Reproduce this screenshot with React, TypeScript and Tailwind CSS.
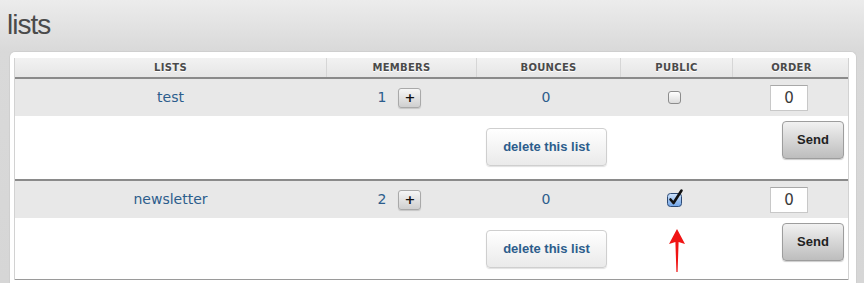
import React from 'react';

type ListRow = {
  name: string;
  members: number;
  bounces: number;
  isPublic: boolean;
  order: number;
};

const lists: ListRow[] = [
  { name: 'test', members: 1, bounces: 0, isPublic: false, order: 0 },
  { name: 'newsletter', members: 2, bounces: 0, isPublic: true, order: 0 },
];

const cols = 'grid grid-cols-[311px_150px_144px_112px_118px]';
const body = { fontFamily: '"DejaVu Sans", Verdana, sans-serif' };
const btn = { fontFamily: '"Liberation Sans", Arial, sans-serif' };

const CheckedBox: React.FC = () => (
  <svg width="20" height="20" viewBox="0 0 20 20" className="-mt-[3px]">
    <defs>
      <linearGradient id="cb" x1="0" y1="0" x2="0" y2="1">
        <stop offset="0" stopColor="#cfe3fb" />
        <stop offset="1" stopColor="#6fa3e6" />
      </linearGradient>
    </defs>
    <rect x="2.5" y="5.5" width="14" height="13" rx="3" fill="url(#cb)" stroke="#2d4a74" strokeWidth="1" />
    <path d="M5.5 11.5 L8.5 15 L16.5 2.5" fill="none" stroke="#111" strokeWidth="2.6" strokeLinecap="round" strokeLinejoin="round" />
  </svg>
);

const UpArrow: React.FC = () => (
  <svg width="18" height="44" viewBox="0 0 18 44">
    <path d="M9 0 L17 15 L10.6 13 L9.6 43 L8.4 43 L7.4 13 L1 15 Z" fill="#f01414" />
  </svg>
);

export default function App() {
  return (
    <div className="w-[864px] h-[283px] overflow-hidden bg-gradient-to-b from-[#ececec] via-[#d9d9d9] via-[18%] to-[#d6d6d6]">
      <h1
        className="pl-[7px] pt-[11px] pb-[12px] text-[28px] leading-[28px] tracking-[-1px] text-[#4a4a4a]"
        style={{ fontFamily: '"Liberation Sans", Arial, sans-serif' }}
      >
        lists
      </h1>
      <div className="ml-[9px] w-[848px] h-[240px] bg-white rounded-t-[6px] border border-b-0 border-[#cfcfcf] pl-[4px] pt-[6px]">
        <div className="w-[835px] border-x border-[#d2d2d2]" style={body}>
          <div className={`${cols} h-[21px] bg-gradient-to-b from-[#f2f2f2] to-[#e6e6e6] border-b-2 border-[#8a8a8a] text-[10px] font-bold tracking-[0.3px] text-[#4a4a4a]`}>
            {['LISTS', 'MEMBERS', 'BOUNCES', 'PUBLIC', 'ORDER'].map((h, i) => (
              <div
                key={h}
                className={`flex items-center justify-center [text-shadow:0_1px_0_#fff] ${i > 0 ? 'border-l border-[#d6d6d6]' : ''}`}
              >
                {h}
              </div>
            ))}
          </div>

          {lists.map((l, idx) => (
            <div key={l.name} className={idx > 0 ? 'border-t-2 border-[#8a8a8a]' : ''}>
              <div className={`${cols} h-[37px] items-center bg-[#e8e8e8] text-[14px] text-[#2c5d8c]`}>
                <div className="text-center">{l.name}</div>
                <div className="flex items-center justify-center gap-[12px] pr-[3px]">
                  <span>{l.members}</span>
                  <button className="w-[23px] h-[20px] rounded-[3px] border border-[#a9a9a9] bg-gradient-to-b from-[#f6f6f6] to-[#cfcfcf] text-[13px] font-bold leading-none text-[#111] shadow-[0_1px_1px_rgba(0,0,0,0.15)]">
                    +
                  </button>
                </div>
                <div className="text-center pr-[4px]">{l.bounces}</div>
                <div className="flex justify-center pr-[3px]">
                  {l.isPublic ? (
                    <CheckedBox />
                  ) : (
                    <span className="block w-[13px] h-[13px] rounded-[3px] border border-[#8c8c8c] bg-gradient-to-b from-white to-[#dcdcdc]" />
                  )}
                </div>
                <div className="flex justify-center pr-[4px]">
                  <input
                    readOnly
                    value={l.order}
                    className="w-[38px] h-[26px] bg-white border border-[#c8c8c8] border-t-[#a8a8a8] text-center text-[15px] text-[#3a3a3a] outline-none"
                  />
                </div>
              </div>
              <div className={`${cols} ${idx === 0 ? 'h-[63px]' : 'h-[61px]'} bg-white`}>
                <div />
                <div />
                <div className="flex justify-center pt-[12px] pr-[3px]">
                  <button
                    className="w-[121px] h-[38px] rounded-[4px] border border-[#cfcfcf] bg-gradient-to-b from-white to-[#eaeaea] text-[13px] font-bold text-[#2c5d8c] shadow-[0_1px_1px_rgba(0,0,0,0.12)]"
                    style={btn}
                  >
                    delete this list
                  </button>
                </div>
                <div className="flex justify-center pt-[11px] pl-[1px]">{l.isPublic && <UpArrow />}</div>
                <div className="flex justify-end pt-[5px] pr-[6px]">
                  <button
                    className="w-[62px] h-[38px] rounded-[4px] border border-[#9d9d9d] bg-gradient-to-b from-[#f1f1f1] to-[#bdbdbd] text-[13px] font-bold text-[#222] shadow-[0_1px_1px_rgba(0,0,0,0.2)]"
                    style={btn}
                  >
                    Send
                  </button>
                </div>
              </div>
            </div>
          ))}
          <div className="border-t border-[#9a9a9a]" />
        </div>
      </div>
    </div>
  );
}
